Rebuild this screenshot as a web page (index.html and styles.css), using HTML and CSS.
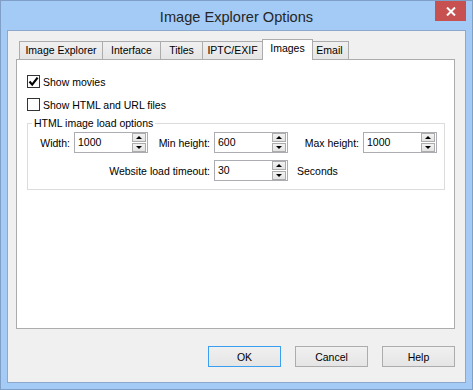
FILE: index.html
```html
<!DOCTYPE html>
<html>
<head>
    <title>Image Explorer Options</title>
    <link rel="stylesheet" href="styles.css">
</head>
<body>
    <div class="window">
        <div class="titlebar">
            <span></span>
            <div class="title">Image Explorer Options</div>
            <div class="close">
                <svg width="10" height="9" viewBox="0 0 10 9"><path d="M1 0.5 L9 8.5 M9 0.5 L1 8.5" stroke="#fff" stroke-width="2"/></svg>
            </div>
        </div>
        <div class="client">
            <div class="tabs">
                <div class="tab t-explorer">Image Explorer</div>
                <div class="tab t-interface">Interface</div>
                <div class="tab t-titles">Titles</div>
                <div class="tab t-iptc">IPTC/EXIF</div>
                <div class="tab t-images active">Images</div>
                <div class="tab t-email">Email</div>
            </div>
            <div class="panel">
                <label class="check">
                    <span class="box"><svg width="11" height="11" viewBox="0 0 11 11"><path d="M1.5 5.5 L4.2 8.6 L9.6 1.6" fill="none" stroke="#000" stroke-width="2.2"/></svg></span>
                    Show movies
                </label>
                <label class="check">
                    <span class="box"></span>
                    Show HTML and URL files
                </label>
                <fieldset class="group">
                    <legend>HTML image load options</legend>
                    <div class="grid">
                        <span class="lab">Width:</span>
                        <div class="spin"><span class="val">1000</span><span class="arrows"><span class="up"></span><span class="down"></span></span></div>
                        <span class="lab">Min height:</span>
                        <div class="spin"><span class="val">600</span><span class="arrows"><span class="up"></span><span class="down"></span></span></div>
                        <span class="lab">Max height:</span>
                        <div class="spin"><span class="val">1000</span><span class="arrows"><span class="up"></span><span class="down"></span></span></div>

                        <span class="lab wide">Website load timeout:</span>
                        <div class="spin"><span class="val">30</span><span class="arrows"><span class="up"></span><span class="down"></span></span></div>
                        <span class="unit">Seconds</span>
                    </div>
                </fieldset>
            </div>
            <div class="buttons">
                <button class="btn default">OK</button>
                <button class="btn">Cancel</button>
                <button class="btn">Help</button>
            </div>
        </div>
    </div>
</body>
</html>
```

FILE: styles.css
```css
body {
    margin: 0;
    font-family: "Liberation Sans", Arial, sans-serif;
    font-size: 10.5px;
    color: #000;
}
.window {
    width: 473px;
    height: 390px;
    box-sizing: border-box;
    background-color: #a3cbf6;
    border: 1px solid #7f9fc6;
    padding: 0 6px 6px 6px;
}
.titlebar {
    height: 29px;
    display: grid;
    grid-template-columns: 1fr auto 1fr;
}
.title {
    align-self: center;
    font-size: 14.6px;
    color: #262626;
    padding-top: 2px;
}
.close {
    justify-self: end;
    width: 31px;
    height: 20px;
    background-color: #c75050;
    display: flex;
    align-items: center;
    justify-content: center;
}
.client {
    background-color: #f0f0f0;
    border: 1px solid #8ca9cd;
    height: 353px;
    box-sizing: border-box;
    padding: 8px 10px 0 8px;
}
.tabs {
    display: flex;
    align-items: flex-end;
    height: 21px;
    margin-bottom: -1px;
    padding-left: 3px;
    position: relative;
    z-index: 1;
}
.tab {
    height: 18px;
    box-sizing: border-box;
    margin-bottom: 1px;
    margin-left: -1px;
    border: 1px solid #acacac;
    border-bottom: none;
    background: linear-gradient(#f0f0f0, #e5e5e5);
    line-height: 17px;
    text-align: center;
}
.tab:first-child {
    margin-left: 0;
}
.t-explorer { width: 84px; }
.t-interface { width: 59px; }
.t-titles { width: 43px; }
.t-iptc { width: 61px; }
.t-images { width: 51px; }
.t-email { width: 39px; }
.tab.active {
    height: 21px;
    margin: 0 -2px 0 -1px;
    padding-bottom: 3px;
    background: #fff;
    line-height: 16px;
    position: relative;
    z-index: 2;
}
.panel {
    height: 270px;
    box-sizing: border-box;
    background-color: #fff;
    border: 1px solid #acacac;
    padding: 15px 10px;
}
.check {
    display: flex;
    align-items: center;
    gap: 3px;
    height: 13px;
}
.check + .check {
    margin-top: 10px;
}
.box {
    width: 13px;
    height: 13px;
    box-sizing: border-box;
    border: 1px solid #333;
    background: #fff;
    display: flex;
    align-items: center;
    justify-content: center;
}
.group {
    width: 418px;
    box-sizing: border-box;
    margin: 6px 0 0 0;
    padding: 2px 0 8px 4px;
    border: 1px solid #dcdcdc;
}
.group legend {
    padding: 0 2px;
    line-height: 13px;
}
.grid {
    margin-left: 7px;
    display: grid;
    grid-template-columns: 35px 74px 66px 74px 75px 74px;
    row-gap: 7px;
    align-items: center;
}
.lab {
    justify-self: end;
    padding-right: 4px;
}
.lab.wide {
    grid-column: 1 / 4;
}
.unit {
    padding-left: 9px;
}
.spin {
    height: 21px;
    box-sizing: border-box;
    border: 1px solid #abadb3;
    background: #fff;
    display: flex;
}
.val {
    flex: 1;
    padding-left: 3px;
    line-height: 19px;
}
.arrows {
    display: flex;
    flex-direction: column;
    gap: 1px;
    padding: 0 1px 0 0;
}
.arrows span {
    width: 14px;
    height: 9px;
    box-sizing: border-box;
    border: 1px solid #acacac;
    background: linear-gradient(#f2f2f2, #e3e3e3);
    display: flex;
    align-items: center;
    justify-content: center;
}
.up::after {
    content: "";
    border-left: 3px solid transparent;
    border-right: 3px solid transparent;
    border-bottom: 3px solid #000;
}
.down::after {
    content: "";
    border-left: 3px solid transparent;
    border-right: 3px solid transparent;
    border-top: 3px solid #000;
}
.buttons {
    display: flex;
    justify-content: flex-end;
    gap: 14px;
    margin-top: 17px;
}
.btn {
    width: 73px;
    height: 21px;
    font-family: "Liberation Sans", Arial, sans-serif;
    font-size: 10.5px;
    color: #000;
    border: 1px solid #acacac;
    background: linear-gradient(#f0f0f0, #e5e5e5);
    padding: 0;
}
.btn.default {
    border-color: #3c9ef0;
}
```
